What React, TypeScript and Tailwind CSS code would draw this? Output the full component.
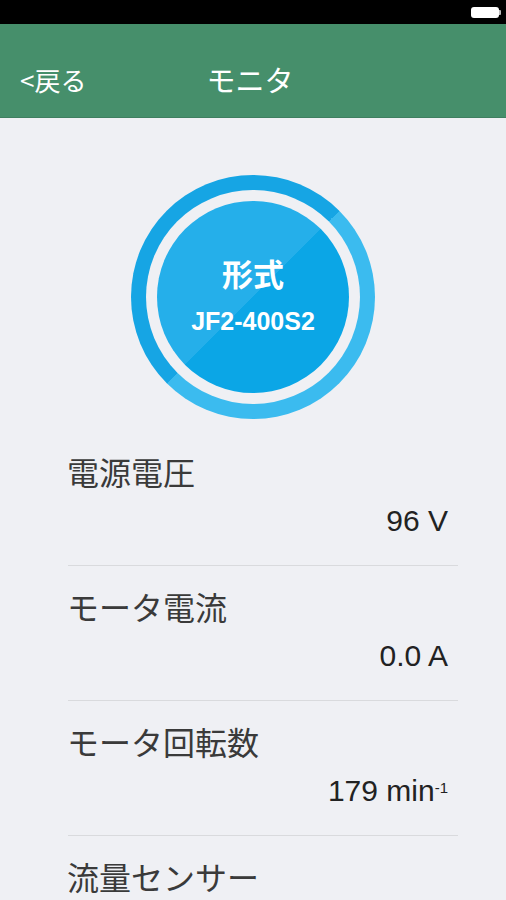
import React from "react";

const jp = "font-['Noto_Sans_CJK_JP','Noto_Sans',sans-serif]";
const num = "font-['Liberation_Sans',Arial,sans-serif]";

function Row({ label, value, sup }: { label: string; value: string; sup?: string }) {
  return (
    <div className="shrink-0 h-[135px] border-b border-[#d9dadd] pt-[22px]">
      <div className={`${jp} text-[32px] leading-[36px] text-[#3a3a3a] ml-[-1px]`}>{label}</div>
      <div className={`${num} mt-[14px] text-right pr-[10px] text-[30px] leading-[36px] text-[#222]`}>
        {value}
        {sup && <span className="text-[15px] align-top relative top-[-3px]">{sup}</span>}
      </div>
    </div>
  );
}

export default function App() {
  return (
    <div className="w-[506px] h-[900px] overflow-hidden bg-[#eff0f4] flex flex-col">
      <div className="shrink-0 h-[24px] bg-black flex items-center justify-end pr-[5px]">
        <div className="flex items-center">
          <div className="w-[28px] h-[11px] rounded-[3px] bg-white" />
          <div className="w-[2px] h-[5px] bg-[#bbb] rounded-r-[1px]" />
        </div>
      </div>
      <div className="shrink-0 h-[94px] bg-[#468f6b] border-b border-[#3f7f60] relative flex items-center">
        <div className={`${jp} absolute left-[20px] top-[39px] text-[26px] leading-[34px] text-white`}>
          &lt;戻る
        </div>
        <div className={`${jp} w-full text-center text-[29px] leading-[36px] text-white pt-[16px] pr-[6px]`}>モニタ</div>
      </div>
      <div className="shrink-0 flex justify-center pt-[57px] pb-[12px]">
        <div className="w-[244px] h-[244px] rounded-full bg-[linear-gradient(135deg,#16a5e4_50%,#3bbbef_50%)] p-[15px]">
          <div className="w-full h-full rounded-full bg-[#eff0f4] p-[11px]">
            <div className="w-full h-full rounded-full bg-[linear-gradient(135deg,#25afea_50%,#0ba6e6_50%)] flex flex-col items-center justify-center text-white">
              <div className={`${jp} text-[31px] leading-[40px] font-bold mt-[-6px]`}>形式</div>
              <div className={`${num} text-[25px] leading-[30px] font-bold mt-[13px]`}>JF2-400S2</div>
            </div>
          </div>
        </div>
      </div>
      <div className="shrink-0 pl-[68px] pr-[48px]">
        <Row label="電源電圧" value="96 V" />
        <Row label="モータ電流" value="0.0 A" />
        <Row label="モータ回転数" value="179 min" sup="-1" />
        <Row label="流量センサー" value="" />
      </div>
    </div>
  );
}
